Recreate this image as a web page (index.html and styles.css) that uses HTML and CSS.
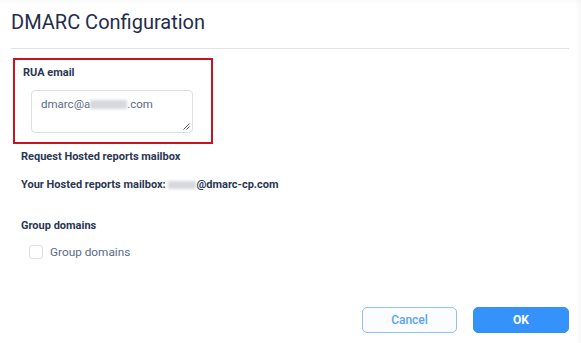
FILE: index.html
```html
<!DOCTYPE html>
<html>
<head>
<meta charset="utf-8">
<link rel="stylesheet" href="styles.css">
</head>
<body>
<div class="modal">
  <div class="header"><h1 class="title">DMARC Configuration</h1></div>
  <div class="content">
    <div class="rua-box">
      <div class="label">RUA email</div>
      <div class="textarea">
        <span>dmarc@a</span><span class="redact redact-a"></span><span>.com</span>
        <svg class="grip" width="7" height="7" viewBox="0 0 7 7"><path d="M6.5 0.5 L0.5 6.5 M6.5 3.5 L3.5 6.5" stroke="#555" stroke-width="1" fill="none"/></svg>
      </div>
    </div>
    <div class="label row-request">Request Hosted reports mailbox</div>
    <div class="label row-mailbox">Your Hosted reports mailbox: <span class="redact redact-b"></span>@dmarc-cp.com</div>
    <div class="label row-group">Group domains</div>
    <label class="check-row"><span class="checkbox"></span><span class="check-text">Group domains</span></label>
  </div>
  <div class="footer">
    <button class="btn btn-cancel">Cancel</button>
    <button class="btn btn-ok">OK</button>
  </div>
</div>
</body>
</html>
```
FILE: styles.css
```css
html, body {
  margin: 0;
  padding: 0;
  background: #ffffff;
}
body {
  font-family: Roboto, "Liberation Sans", sans-serif;
  color: #26344f;
}
.modal {
  width: 581px;
  height: 343px;
  box-sizing: border-box;
  padding: 0 12px 10px 11px;
  display: flex;
  flex-direction: column;
  background: #fff;
  box-shadow: inset -8px 0 6px -6px rgba(0,0,0,0.04), inset 0 8px 6px -6px rgba(0,0,0,0.03);
}
.header {
  height: 49px;
  box-sizing: border-box;
  border-bottom: 1px solid #e3e3e3;
  padding-top: 9px;
}
.title {
  margin: 0;
  font-weight: 400;
  font-size: 20px;
  line-height: 26px;
  color: #1f2d4b;
  letter-spacing: 0;
}
.content {
  padding-left: 2px;
  padding-top: 9px;
  display: flex;
  flex-direction: column;
  align-items: flex-start;
}
.rua-box {
  width: 200px;
  height: 86px;
  box-sizing: border-box;
  border: 2px solid #c8141c;
  padding: 6px 8px 0 8px;
}
.label {
  font-size: 11px;
  font-weight: 700;
  line-height: 14px;
  color: #2a3753;
}
.textarea {
  position: relative;
  margin: 10px 0 0 8px;
  width: 162px;
  height: 43px;
  box-sizing: border-box;
  border: 1px solid #dcdfe4;
  border-radius: 4px;
  padding: 5px 9px;
  font-size: 11.5px;
  line-height: 16px;
  color: #5b6a86;
  display: flex;
  align-items: flex-start;
}
.grip {
  position: absolute;
  right: 2px;
  bottom: 2px;
}
.redact {
  display: inline-block;
  background: #d6d8dc;
  filter: blur(1.5px);
}
.redact-a {
  width: 37px;
  height: 9px;
  margin-top: 4px;
}
.redact-b {
  width: 28px;
  height: 8px;
  vertical-align: -1px;
}
.row-request {
  margin-top: 6px;
  margin-left: 8px;
}
.row-mailbox {
  margin-top: 14px;
  margin-left: 8px;
}
.row-group {
  margin-top: 27px;
  margin-left: 8px;
}
.check-row {
  margin-top: 11px;
  margin-left: 16px;
  display: flex;
  align-items: center;
  gap: 7px;
}
.checkbox {
  width: 12px;
  height: 12px;
  border: 1px solid #dcdfe4;
  border-radius: 3px;
  background: #fff;
}
.check-text {
  font-size: 11.8px;
  line-height: 16px;
  color: #5b6a86;
}
.footer {
  margin-top: auto;
  display: flex;
  justify-content: flex-end;
  gap: 16px;
}
.btn {
  width: 96px;
  height: 26px;
  box-sizing: border-box;
  border-radius: 5px;
  font-family: inherit;
  font-size: 12px;
  cursor: pointer;
}
.btn-cancel {
  width: 95px;
  background: #fafcff;
  border: 1px solid #8fc1f6;
  color: #5aa3f2;
  font-weight: 500;
}
.btn-ok {
  background: #3592fa;
  border: 1px solid #3592fa;
  color: #ffffff;
  font-weight: 700;
}
```
